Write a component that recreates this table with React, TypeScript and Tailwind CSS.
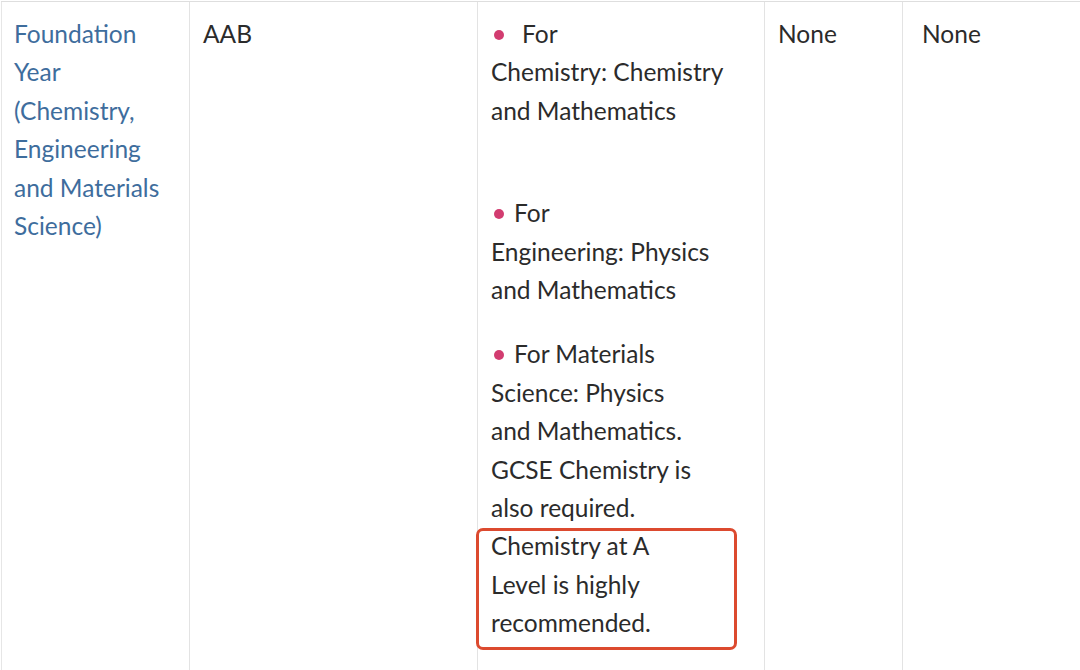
export default function App() {
  const font = { fontFamily: 'Lato, "Open Sans", sans-serif' }

  return (
    <div className="h-[670px] w-[1080px] overflow-hidden bg-white" style={font}>
      <div className="ml-px mt-px grid grid-cols-[188px_288px_287px_138px_1fr] border-t border-[#dedede] text-[24.5px] leading-[38.4px] text-[#2b2b2b]">
        {/* course name */}
        <div className="h-[700px] border-l border-[#e6e6e6] pl-[12px] pr-2 pt-[13px] text-[#3e6d9d]">
          Foundation Year (Chemistry, Engineering and Materials Science)
        </div>

        {/* grades */}
        <div className="border-l border-[#e3e3e3] pl-[13px] pt-[13px]">AAB</div>

        {/* required subjects */}
        <div className="border-l border-[#e3e3e3] pl-[13px] pt-[13px]">
          <p className="mb-[64px]">
            <span className="ml-[3px] mr-[18px] inline-block h-[10px] w-[10px] rounded-full bg-[#d23c70] align-[3px]" />
            For
            <br />
            Chemistry: Chemistry
            <br />
            and Mathematics
          </p>
          <p className="mb-[26px]">
            <span className="ml-[3px] mr-[10px] inline-block h-[10px] w-[10px] rounded-full bg-[#d23c70] align-[3px]" />
            For
            <br />
            Engineering: Physics
            <br />
            and Mathematics
          </p>
          <p>
            <span className="ml-[3px] mr-[10px] inline-block h-[10px] w-[10px] rounded-full bg-[#d23c70] align-[3px]" />
            For Materials
            <br />
            Science: Physics
            <br />
            and Mathematics.
            <br />
            GCSE Chemistry is
            <br />
            also required.
          </p>
          <p className="relative">
            Chemistry at A
            <br />
            Level is highly
            <br />
            recommended.
            {/* highlight annotation */}
            <span className="absolute -left-[15px] top-px h-[122px] w-[261px] rounded-[7px] border-[3px] border-[#dc4a2f]" />
          </p>
        </div>

        <div className="border-l border-[#e3e3e3] pl-[13px] pt-[13px]">None</div>
        <div className="border-l border-[#e3e3e3] pl-[19px] pt-[13px]">None</div>
      </div>
    </div>
  )
}
